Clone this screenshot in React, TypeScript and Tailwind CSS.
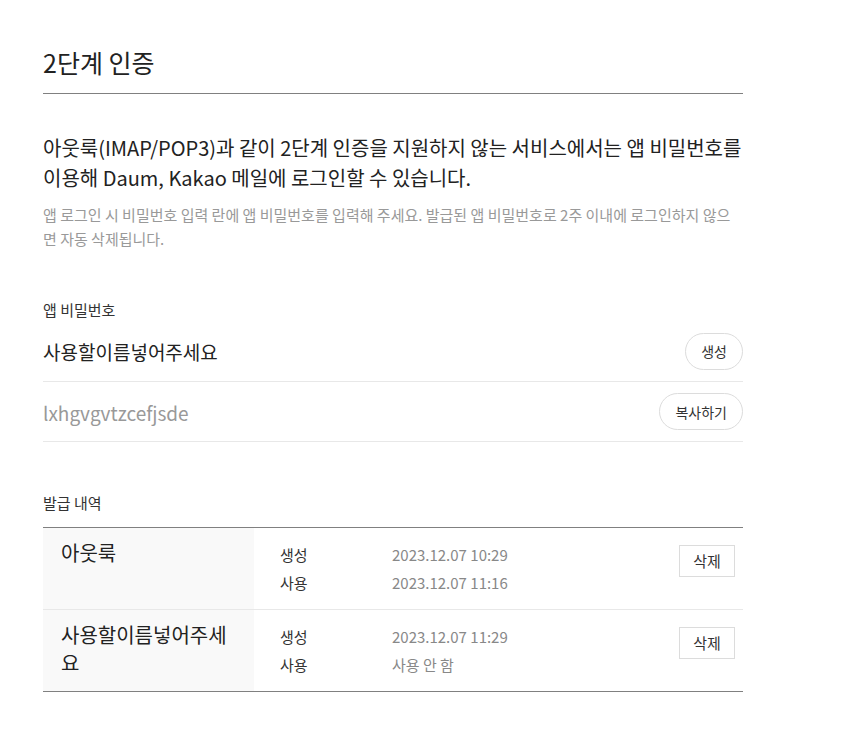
const font = { fontFamily: '"Noto Sans CJK KR", "Noto Sans", sans-serif' };

const history = [
  { name: '아웃룩', created: '2023.12.07 10:29', used: '2023.12.07 11:16' },
  { name: '사용할이름넣어주세요', created: '2023.12.07 11:29', used: '사용 안 함' },
];

export default function App() {
  return (
    <div className="min-h-screen bg-white text-[#222]" style={font}>
      <div className="ml-[43px] w-[700px] pt-[46px] pb-10">
        {/* Title */}
        <h1 className="border-b border-[#808080] pb-[15px] text-[25px] leading-8 font-normal">2단계 인증</h1>

        {/* Description */}
        <p className="mt-[39px] text-xl leading-[30px]">
          아웃룩(IMAP/POP3)과 같이 2단계 인증을 지원하지 않는 서비스에서는 앱 비밀번호를 이용해 Daum, Kakao 메일에 로그인할 수 있습니다.
        </p>
        <p className="mt-[10px] text-[15px] leading-6 text-[#999]">
          앱 로그인 시 비밀번호 입력 란에 앱 비밀번호를 입력해 주세요. 발급된 앱 비밀번호로 2주 이내에 로그인하지 않으면 자동 삭제됩니다.
        </p>

        {/* App password */}
        <div className="mt-12 text-[15px] leading-[22px] text-[#333]">앱 비밀번호</div>
        <div className="flex h-[61px] items-center justify-between border-b border-[#e8e8e8]">
          <span className="pt-[3px] text-[19px]">사용할이름넣어주세요</span>
          <button className="h-[37px] rounded-full border border-[#dcdcdc] px-[15px] text-sm text-[#333]">생성</button>
        </div>
        <div className="flex h-[60px] items-center justify-between border-b border-[#e8e8e8]">
          <span className="pt-[3px] text-[19px] text-[#999]">lxhgvgvtzcefjsde</span>
          <button className="h-[37px] rounded-full border border-[#dcdcdc] px-[15px] text-sm text-[#333]">복사하기</button>
        </div>

        {/* History */}
        <div className="mt-[50px] text-[15px] leading-[22px] text-[#333]">발급 내역</div>
        <div className="mt-[13px] border-y border-[#808080]">
          {history.map((row, i) => (
            <div key={row.name} className={`flex ${i > 0 ? 'border-t border-[#e8e8e8]' : ''}`}>
              <div className="w-[211px] shrink-0 bg-[#f9f9f9] pt-[11px] pr-5 pb-3 pl-[18px] text-xl leading-7">
                {row.name}
              </div>
              <div className="flex flex-1 items-start justify-between pt-[13px] pr-2 pb-3 pl-[26px]">
                <div className="grid grid-cols-[112px_1fr] text-[15px] leading-7">
                  <span className="text-[#333]">생성</span>
                  <span className="text-[#888]">{row.created}</span>
                  <span className="text-[#333]">사용</span>
                  <span className="text-[#888]">{row.used}</span>
                </div>
                <button className="mt-1 h-8 w-14 border border-[#dcdcdc] text-[15px] text-[#333]">삭제</button>
              </div>
            </div>
          ))}
        </div>
      </div>
    </div>
  );
}
